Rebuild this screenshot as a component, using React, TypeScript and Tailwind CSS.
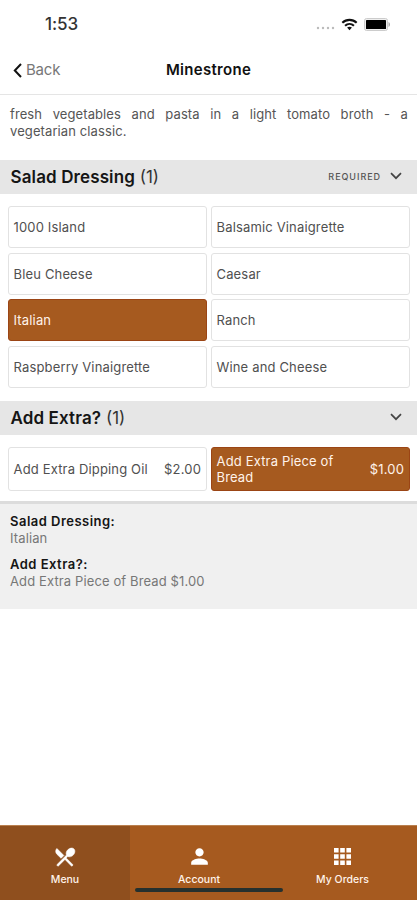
import clsx from 'clsx';
import { MdPerson } from 'react-icons/md';

const dressings = [
	'1000 Island',
	'Balsamic Vinaigrette',
	'Bleu Cheese',
	'Caesar',
	'Italian',
	'Ranch',
	'Raspberry Vinaigrette',
	'Wine and Cheese',
];

function Chevron() {
	return (
		<svg viewBox="0 0 12 8" className="w-3 h-2" fill="none" stroke="#444" strokeWidth="1.7">
			<path d="M1 1.2 6 6.2 11 1.2" />
		</svg>
	);
}

function StatusBar() {
	return (
		<div className="h-[46px] flex items-center justify-between pl-[45px] pr-[26px] pt-[2px]">
			<span className="text-[17px] font-medium tracking-[-0.1px] text-[#333] mt-[2px]">1:53</span>
			<div className="flex items-center">
				<svg viewBox="0 0 19 4" className="w-[19px] h-1 mt-[8px]" fill="#bbb">
					<circle cx="2" cy="2" r="1.2" />
					<circle cx="7" cy="2" r="1.2" />
					<circle cx="12" cy="2" r="1.2" />
					<circle cx="17" cy="2" r="1.2" />
				</svg>
				<svg viewBox="0 0 18 13" className="w-[17px] h-[13px] ml-[6px]" fill="none" stroke="#111" strokeWidth="2.2">
					<path d="M1.4 4.7C5.7.6 12.3.6 16.6 4.7" />
					<path d="M4.3 7.8c2.7-2.5 6.7-2.5 9.4 0" />
					<path d="m9 12.5-2.6-2.7c1.5-1.3 3.7-1.3 5.2 0Z" fill="#111" stroke="none" />
				</svg>
				<svg viewBox="0 0 27 13" className="w-[27px] h-[13px] ml-[6px]">
					<rect x=".5" y=".5" width="23" height="12" rx="2" fill="#eee" stroke="#ccc" />
					<rect x="2" y="2" width="20" height="9" rx=".6" fill="#000" />
					<path d="M24.5 4v5c2-.8 2-4.2 0-5Z" fill="#aaa" />
				</svg>
			</div>
		</div>
	);
}

function SectionHeader({ title, required }: { title: string; required?: boolean }) {
	return (
		<div className="h-[34px] flex items-center justify-between pl-[10.5px] pr-[15px] bg-[#e6e6e6]">
			<h2 className="text-[17px] leading-[35px] text-[#333]">
				<b className="font-semibold tracking-[0.12px] text-[#151515]">{title}</b> (1)
			</h2>
			<div className="flex items-center gap-[9px] -mt-[3px]">
				{required && (
					<span className="text-[9px] leading-3 font-medium tracking-[0.95px] text-[#555] mt-[2px]">REQUIRED</span>
				)}
				<Chevron />
			</div>
		</div>
	);
}

function Option({ label, price, selected }: { label: string; price?: string; selected?: boolean }) {
	return (
		<button
			className={clsx(
				'flex items-center justify-between pl-[4.5px] pr-[5px] rounded-[3px] border text-left text-[13px] leading-4 tracking-[0.16px]',
				price ? 'h-11' : 'h-[42px]',
				selected ? 'bg-[#a65a1f] border-[#9b4515] text-[#fff3ea]' : 'bg-white border-[#e2e2e2] text-[#505050]'
			)}
		>
			<span className={clsx(selected && price && 'w-[122px]')}>{label}</span>
			{price && <span>{price}</span>}
		</button>
	);
}

export default function App() {
	return (
		<main className="w-full h-[900px] flex flex-col bg-white font-[Inter,sans-serif]">
			<StatusBar />
			<header className="h-[49px] grid grid-cols-[1fr_auto_1fr] items-center border-b border-[#e5e5e5] pl-[13px] pr-[13px]">
				<button className="flex items-center gap-1 text-[15px] tracking-[-0.2px] text-[#777]">
					<svg viewBox="0 0 9 15" className="w-[9px] h-[15px]" fill="none" stroke="#111" strokeWidth="2">
						<path d="M8 1 1.8 7.5 8 14" />
					</svg>
					Back
				</button>
				<h1 className="text-[15px] font-semibold tracking-[0.3px] text-[#111]">Minestrone</h1>
			</header>

			<p className="h-[65px] pt-[11px] pl-[10px] pr-[9px] text-[13px] leading-[17px] tracking-[0.1px] text-justify text-[#555]">
				fresh vegetables and pasta in a light tomato broth - a vegetarian classic.
			</p>

			<SectionHeader title="Salad Dressing" required />
			<div className="h-[207px] grid grid-cols-2 content-start gap-x-1 gap-y-[4.67px] pt-3 pl-2 pr-[7px]">
				{dressings.map((name) => (
					<Option key={name} label={name} selected={name === 'Italian'} />
				))}
			</div>

			<SectionHeader title="Add Extra?" />
			<div className="h-[66px] grid grid-cols-2 content-start gap-x-1 pt-3 pl-2 pr-[7px]">
				<Option label="Add Extra Dipping Oil" price="$2.00" />
				<Option label="Add Extra Piece of Bread" price="$1.00" selected />
			</div>

			<dl className="h-[108px] border-t-[3px] border-[#dcdcdc] bg-[#f0f0f0] pt-[9px] pl-[10px] text-[13px] leading-[17px] tracking-[0.12px] text-[#777]">
				<dt className="font-semibold tracking-[0.48px] text-[#151515]">Salad Dressing:</dt>
				<dd className="mb-[9px]">Italian</dd>
				<dt className="font-semibold tracking-[0.48px] text-[#151515]">Add Extra?:</dt>
				<dd>Add Extra Piece of Bread $1.00</dd>
			</dl>

			<nav className="relative mt-auto h-[75px] grid grid-cols-[130px_138px_1fr] border-t border-[#b9804f] bg-[#a65a1f] text-[10.5px] font-medium leading-3 text-[#fff3ea]">
				<a className="flex flex-col items-center pt-5 bg-[#8f4f1e]">
					<svg viewBox="0 0 24 24" className="w-6 h-6 -mt-[1.5px] -mb-[0.5px]" fill="#fff" stroke="#fff" strokeWidth=".6">
						<path d="m8.1 13.3 2.8-2.8-7-7a4 4 0 0 0 0 5.7l4.2 4.1zm6.8-1.8c1.5.7 3.7.2 5.3-1.4 1.9-1.9 2.2-4.6.8-6.1-1.5-1.5-4.2-1.1-6.2.8-1.6 1.6-2 3.8-1.3 5.3l-9.8 9.8 1.4 1.4 6.9-6.9 6.7 6.9 1.4-1.4-6.9-6.9 1.5-1.5z" />
					</svg>
					<span className="mt-[6px]">Menu</span>
				</a>
				<a className="flex flex-col items-center pt-5">
					<MdPerson className="w-[25px] h-[25px] -mt-[2.5px] -mb-[0.5px] text-white" />
					<span className="mt-[6px]">Account</span>
				</a>
				<a className="flex flex-col items-center pt-[22px]">
					<svg viewBox="0 0 17 17" className="w-[17px] h-[17px]" fill="#fff">
						<path d="M0 0h4.6v4.6H0zM6.2 0h4.6v4.6H6.2zM12.4 0H17v4.6h-4.6zM0 6.2h4.6v4.6H0zM6.2 6.2h4.6v4.6H6.2zM12.4 6.2H17v4.6h-4.6zM0 12.4h4.6V17H0zM6.2 12.4h4.6V17H6.2zM12.4 12.4H17V17h-4.6z" />
					</svg>
					<span className="mt-[9px]">My Orders</span>
				</a>
				<div className="absolute left-[135px] bottom-2 w-[148px] h-1 rounded-full bg-[#25302e]" />
			</nav>
		</main>
	);
}
